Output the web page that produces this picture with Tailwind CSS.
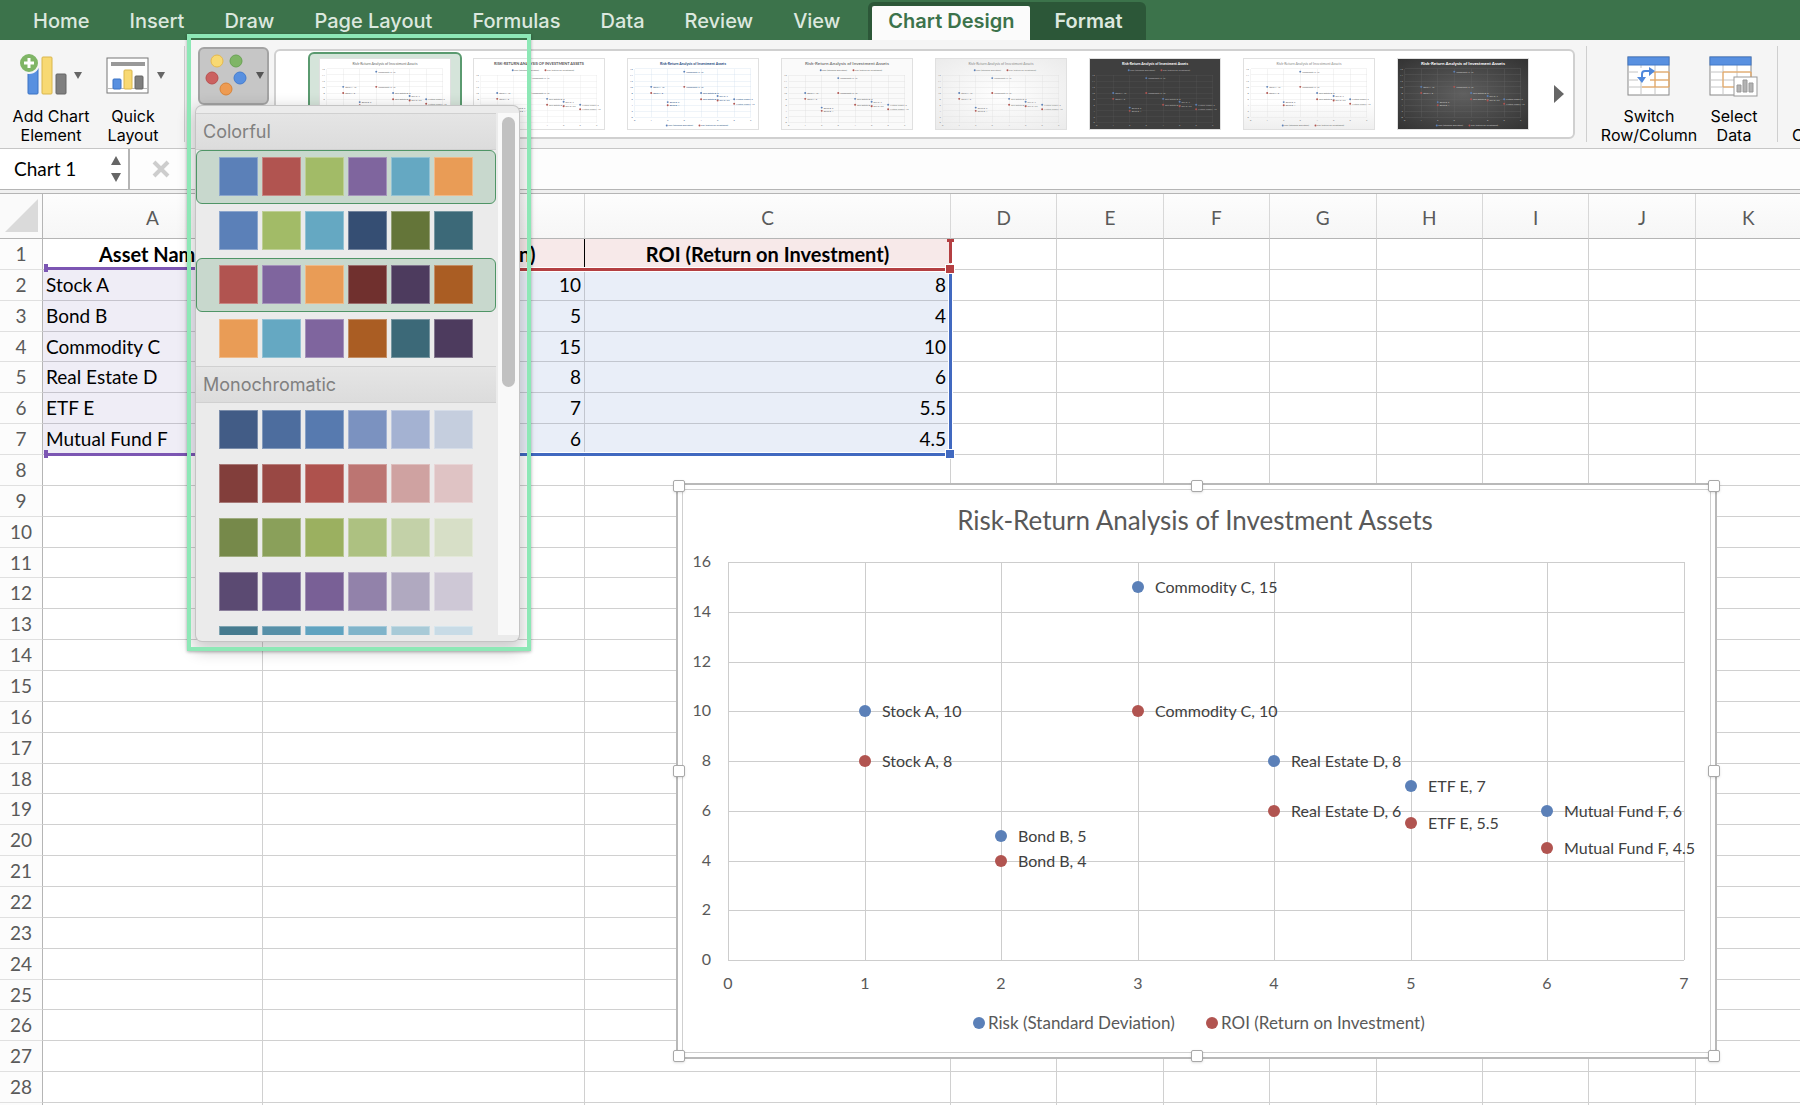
<!DOCTYPE html>
<html lang="en">
  <head>
    <meta charset="utf-8">
    <title>Chart 1</title>
    <script src="https://cdn.jsdelivr.net/npm/@tailwindcss/browser@4"></script>
  </head>

  <body class="relative flex h-screen flex-col overflow-hidden bg-white font-[Inter,sans-serif] text-black">
    <!-- Ribbon tabs -->
    <nav class="flex h-10 shrink-0 items-end bg-[#3c734b] pl-[13px] text-xl font-medium text-[#dce8df]">
      <a href="#" class="px-5 pb-[5px]">Home</a>
      <a href="#" class="px-5 pb-[5px]">Insert</a>
      <a href="#" class="px-5 pb-[5px]">Draw</a>
      <a href="#" class="px-5 pb-[5px]">Page Layout</a>
      <a href="#" class="px-5 pb-[5px]">Formulas</a>
      <a href="#" class="px-5 pb-[5px]">Data</a>
      <a href="#" class="px-5 pb-[5px]">Review</a>
      <a href="#" class="px-5 pb-[5px]">View</a>
      <div class="ml-2 flex h-[38px] items-end rounded-t-md bg-[#2c5738] pl-1 font-semibold">
        <a href="#" class="flex h-[34px] items-end rounded-t-xs bg-[#fbfbfb] px-4 pb-[5px] text-[#3c734b]">Chart Design</a>
        <a href="#" class="px-6 pb-[5px]">Format</a>
      </div>
    </nav>

    <!-- Ribbon -->
    <div class="flex h-[109px] shrink-0 overflow-hidden border-b border-[#c6c6c6] bg-[#f5f5f5] text-base leading-[19px]">
      <button class="ml-2 flex w-[86px] flex-col items-center">
        <svg class="ml-0.5 h-[67px] w-[68px]" viewBox="18 40 68 67">
          <rect x="28" y="67" width="10" height="27" rx="1" fill="#5890e0" stroke="#3b73c4"/>
          <rect x="42" y="57" width="10" height="37" rx="1" fill="#f8d973" stroke="#d9b64d"/>
          <rect x="56" y="74" width="10" height="20" rx="1" fill="#7f7f7f" stroke="#666"/>
          <circle cx="29" cy="63" r="10" fill="#7fb566" stroke="#f5f5f5" stroke-width="2"/>
          <path d="M29 58v10M24 63h10" stroke="#fff" stroke-width="3"/>
          <path d="M74 72h8l-4 7z" fill="#666"/>
        </svg>
        <span>Add Chart<br>Element</span>
      </button>
      <button class="ml-1 flex w-[70px] flex-col items-center">
        <svg class="ml-1 h-[67px] w-[64px]" viewBox="103 40 64 67">
          <rect x="107" y="58" width="41" height="35" fill="#fff" stroke="#777"/>
          <rect x="111" y="62" width="34" height="4" fill="#999"/>
          <path d="M108 88.500h39" stroke="#bbb"/>
          <rect x="113" y="79" width="8" height="10" rx="1" fill="#5890e0" stroke="#3b73c4"/>
          <rect x="124" y="70" width="8" height="19" rx="1" fill="#f8d973" stroke="#d9b64d"/>
          <rect x="135" y="76" width="8" height="13" rx="1" fill="#7f7f7f" stroke="#666"/>
          <path d="M157 72h8l-4 7z" fill="#666"/>
        </svg>
        <span>Quick<br>Layout</span>
      </button>
      <div class="mt-1.5 ml-4 h-24 w-px bg-[#cfcfcf]"></div>
      <button aria-label="Change Colors" class="mt-[7px] ml-[13px] h-[58px] w-[71px] rounded-md border-2 border-[#a3a3a3] bg-[#c6c6c6]">
        <svg class="h-[54px] w-[67px]" viewBox="200 49 67 54">
          <circle cx="217" cy="61" r="6" fill="#f8d973" stroke="#e6b94c"/>
          <circle cx="236" cy="61" r="6" fill="#7fb566" stroke="#6aa354"/>
          <circle cx="212" cy="78" r="6" fill="#cb6160" stroke="#b94f4e"/>
          <circle cx="240" cy="78" r="6" fill="#5890e0" stroke="#447cce"/>
          <circle cx="226" cy="89" r="6" fill="#ee9b52" stroke="#d98439"/>
          <path d="M256 72h8l-4 7z" fill="#555"/>
        </svg>
      </button>
      <div class="mt-[9px] ml-[5px] flex h-[90px] min-w-0 flex-1 items-start rounded-md border-2 border-[#d0d0d0] bg-white pl-8">
        <div id="gallery" class="flex min-w-0 flex-1 overflow-hidden"></div>
        <button aria-label="More styles" class="flex h-[86px] w-7 items-center justify-center">
          <svg class="h-5 w-3" viewBox="0 0 12 20"><path d="M1 1l10 9L1 19z" fill="#666"/></svg>
        </button>
      </div>
      <div class="mt-1.5 ml-[11px] h-24 w-px bg-[#cfcfcf]"></div>
      <button class="ml-3 flex w-[100px] flex-col items-center">
        <svg class="h-[67px] w-[44px]" viewBox="1627 40 44 67">
          <rect x="1628" y="57" width="41" height="38" fill="#fff" stroke="#888"/>
          <path d="M1641 65v30M1655 65v30M1628 72h41M1628 80h41M1628 87h41" stroke="#c4c4c4"/>
          <path d="M1642 72h27v15h-27M1655 72v15M1648 80h21" fill="none" stroke="#f0a450"/>
          <rect x="1628" y="57" width="41" height="8" fill="#5890e0" stroke="#4178c8"/>
          <path d="M1638 68h12v13h-12z" fill="#fff"/>
          <path d="M1642 78v-4q0-3 3-3h5" fill="none" stroke="#4f88dc" stroke-width="2"/>
          <path d="M1649 67l6 4-6 5zM1637 77h9l-4 6z" fill="#4f88dc"/>
        </svg>
        <span>Switch<br>Row/Column</span>
      </button>
      <button class="ml-2 flex w-[54px] flex-col items-center">
        <svg class="h-[67px] w-[52px]" viewBox="1709 40 52 67">
          <rect x="1711" y="57" width="41" height="38" fill="#fff" stroke="#888"/>
          <path d="M1724 65v30M1738 65v30M1711 72h41M1711 80h41M1711 87h41" stroke="#c4c4c4"/>
          <path d="M1752 72h-28v15h12" fill="none" stroke="#f0a450"/>
          <path d="M1752 72v6" stroke="#f0a450"/>
          <rect x="1711" y="57" width="41" height="8" fill="#5890e0" stroke="#4178c8"/>
          <rect x="1735" y="77" width="23" height="19" fill="#fff" stroke="#999"/>
          <path d="M1738 85h4v7h-4zM1744 80h4v12h-4zM1750 83h4v9h-4z" fill="#b3b3b3" stroke="#999"/>
        </svg>
        <span>Select<br>Data</span>
      </button>
      <div class="mt-1.5 ml-4 h-24 w-px bg-[#cfcfcf]"></div>
      <button class="ml-3.5 flex w-2 flex-col overflow-hidden pt-[86px] text-left">C</button>
    </div>

    <!-- Formula bar -->
    <div class="flex h-[41px] shrink-0 border-b border-[#b5b5b5] bg-[#fdfdfd] font-[Lato,sans-serif]">
      <div class="flex w-[130px] items-center border-r-2 border-[#b5b5b5] bg-white">
        <input aria-label="Name box" value="Chart 1" class="ml-3.5 w-24 text-[19px]">
        <button aria-label="Next name">
          <svg class="h-8 w-3" viewBox="0 0 12 32"><path d="M1 12l5-9 5 9zM1 20l5 9 5-9z" fill="#666"/></svg>
        </button>
      </div>
      <button aria-label="Cancel" class="ml-[22px]">
        <svg class="h-[18px] w-[18px]" viewBox="0 0 18 18"><path d="M2 2l14 14M16 2L2 16" stroke="#cdcdcd" stroke-width="4"/></svg>
      </button>
      <input aria-label="Formula" class="ml-4 flex-1">
    </div>
    <div class="h-1 shrink-0 border-b border-[#b5b5b5] bg-[#f0f0f0]"></div>

    <!-- Sheet -->
    <main class="relative min-h-0 flex-1 overflow-hidden font-[Lato,sans-serif]">
      <table class="h-[940px] w-[calc(100%+2px)] table-fixed border-separate border-spacing-0 text-[19px] leading-6">
        <colgroup>
          <col class="w-[43px]"><col class="w-[220px]"><col class="w-[322px]"><col class="w-[366px]">
          <col><col><col><col><col><col><col><col>
        </colgroup>
        <thead>
          <tr id="columns" class="h-[45px]"></tr>
        </thead>
        <tbody id="rows"></tbody>
      </table>

      <!-- Outlines of the ranges that feed the chart -->
      <div class="absolute top-[73px] left-12 h-[3px] w-[215px] bg-[#7c56b3]"></div>
      <div class="absolute top-[70px] left-11 h-2 w-1 bg-[#7c56b3]"></div>
      <div class="absolute top-[259px] left-12 h-[3px] w-[215px] bg-[#7c56b3]"></div>
      <div class="absolute top-[256px] left-11 h-2 w-1 bg-[#7c56b3]"></div>
      <div class="absolute top-[73px] left-[263px] h-[5px] w-[683px] border-y border-white bg-[#b43f42]"></div>
      <div class="absolute top-[45px] left-[949px] h-6 w-[3px] bg-[#b43f42]"></div>
      <div class="absolute top-[45px] left-[947px] h-[3px] w-[7px] bg-[#b43f42]"></div>
      <div class="absolute top-[258px] left-[263px] h-[5px] w-[683px] border-y border-white bg-[#4169c0]"></div>
      <div class="absolute top-[79px] left-[948px] h-[176px] w-[5px] border-x border-white bg-[#4169c0]"></div>
      <div class="absolute top-[70px] left-[945px] size-2.5 border border-white bg-[#b43f42]"></div>
      <div class="absolute top-[255px] left-[945px] size-2.5 border border-white bg-[#4169c0]"></div>

      <!-- Chart object -->
      <section class="absolute top-[289px] left-[676px] h-[576px] w-[1041px] border-2 border-[#b9b9b9] bg-white p-1">
        <div class="h-full border border-[#cfcfcf]">
          <svg id="chart" class="h-[562px] w-[1027px]" viewBox="683 490 1027 562"></svg>
        </div>
        <div id="handles"></div>
      </section>
    </main>

    <!-- Colour menu -->
    <div class="absolute top-[106px] left-[196px] flex h-[535px] w-[323px] flex-col overflow-hidden rounded-md bg-[#ebebeb] pt-[7px] pb-1.5 shadow-[0_0_0_1px_#c4c4c4,0_6px_16px_4px_rgba(0,0,0,0.2)]">
      <div class="flex min-h-0 flex-1">
        <div id="palettes" class="w-[300px] overflow-hidden"></div>
        <div class="ml-0.5 flex-1 bg-[#f9f9f9] pt-1 pl-1">
          <div class="h-[270px] w-[13px] rounded-full bg-[#c1c1c1]"></div>
        </div>
      </div>
    </div>
    <!-- Highlight frame -->
    <div class="pointer-events-none absolute top-[34px] left-[187px] h-[617px] w-[344px] border-4 border-[#8de8b6] shadow-[0_1px_3px_rgba(0,0,0,0.3)]"></div>

    <script>
      const assets = [
        { name: 'Stock A', risk: 10, roi: 8 },
        { name: 'Bond B', risk: 5, roi: 4 },
        { name: 'Commodity C', risk: 15, roi: 10 },
        { name: 'Real Estate D', risk: 8, roi: 6 },
        { name: 'ETF E', risk: 7, roi: 5.5 },
        { name: 'Mutual Fund F', risk: 6, roi: 4.5 },
      ]
      const title = 'Risk-Return Analysis of Investment Assets'
      const get = (id) => document.getElementById(id)
      const range = (n) => [...Array(n).keys()]

      // Sheet
      get('columns').innerHTML = `
        <th class="border-r border-b border-[#b5b5b5] bg-[#fafafa]"><svg class="ml-1 size-9" viewBox="0 0 36 36"><path d="M34 1v33H1z" fill="#dadada"/></svg></th>
        ${[...'ABCDEFGHIJK'].map((letter) => `
          <th scope="col" class="border-r border-b border-r-[#d8d8d8] border-b-[#b5b5b5] bg-linear-to-b from-[#fdfdfd] to-[#f6f6f6] pt-1 font-normal text-[#5a5a5a]">${letter}</th>
        `).join('')}`

      const cell = 'border-r border-b border-[#d0d0d0]'

      function cells(row) {
        if (row === 0) {
          return `
            <td class="border-r border-b border-[#d0d0d0] text-center text-[20px] font-bold">Asset Name</td>
            <td class="border-r border-b border-r-black border-b-[#d0d0d0] bg-[#f7e9e9] text-center text-[20px] font-bold">Risk (Standard Deviation)</td>
            <td class="border-r border-b border-[#d0d0d0] bg-[#f7e9e9] text-center text-[20px] font-bold">ROI (Return on Investment)</td>`
        }
        const asset = assets[row - 1]
        if (!asset) return `<td class="${cell}"></td>`.repeat(3)
        return `
          <td class="border-r border-b border-[#c6c4cd] bg-[#efedf6] pl-[3px]">${asset.name}</td>
          <td class="border-r border-b border-[#c2c6cf] bg-[#e9eef8] pr-[3px] text-right">${asset.risk}</td>
          <td class="border-r border-b border-[#c2c6cf] bg-[#e9eef8] pr-1 text-right">${asset.roi}</td>`
      }

      get('rows').innerHTML = range(29).map((row) => `
        <tr>
          <th scope="row" class="border-r border-b border-r-[#b5b5b5] border-b-[#e0e0e0] bg-[#fcfcfc] font-normal text-[#5a5a5a]">${row + 1}</th>
          ${cells(row)}
          ${`<td class="${cell}"></td>`.repeat(8)}
        </tr>
      `).join('')

      // Scatter plot, x0..x1 by y0..y1 (y1 is the baseline)
      function plot({ x0, x1, y0, y1, grid, text, size, radius, gap, label, axis, blue = '#5b80b8', red = '#b15450' }) {
        const px = (v) => Math.round(x0 + (x1 - x0) * v / 7)
        const py = (v) => Math.round(y1 - (y1 - y0) * v / 16)
        const point = (x, v, name, fill) => `
          <circle cx="${px(x)}" cy="${py(v)}" r="${radius}" fill="${fill}"/>
          <text x="${px(x) + gap}" y="${py(v) + Math.round(size * 0.36)}" fill="${label}">${name}, ${v}</text>`
        return `
          <g stroke="${grid}" shape-rendering="crispEdges">
            ${range(8).map((v) => `<path d="M${px(v)} ${y0}V${y1}"/>`).join('')}
            ${range(9).map((v) => `<path d="M${x0} ${py(v * 2)}H${x1}"/>`).join('')}
          </g>
          <g font-size="${size}" fill="${text}">
            <g text-anchor="end">${range(9).map((v) => `<text x="${x0 - gap}" y="${py(v * 2) + (size > 10 ? 5 : 3)}">${v * 2}</text>`).join('')}</g>
            <g text-anchor="middle">${range(8).map((v) => `<text x="${px(v)}" y="${y1 + axis}">${v}</text>`).join('')}</g>
            ${assets.map((a, i) => point(i + 1, a.risk, a.name, blue) + point(i + 1, a.roi, a.name, red)).join('')}
          </g>`
      }

      get('chart').innerHTML = `
        <text x="1195" y="530" text-anchor="middle" font-size="26" fill="#595959">${title}</text>
        ${plot({ x0: 728, x1: 1684, y0: 562, y1: 960, grid: '#cdcdcd', text: '#595959', size: 16, radius: 6, gap: 17, label: '#404040', axis: 29 })}
        <g font-size="17" fill="#595959">
          <circle cx="979" cy="1023" r="6" fill="#5b80b8"/><text x="988" y="1029">Risk (Standard Deviation)</text>
          <circle cx="1212" cy="1023" r="6" fill="#b15450"/><text x="1221" y="1029">ROI (Return on Investment)</text>
        </g>`

      get('handles').innerHTML = [
        '-top-[5px] -left-[5px]', '-top-[5px] inset-x-0 mx-auto', '-top-[5px] -right-[5px]',
        'inset-y-0 my-auto -left-[5px]', 'inset-y-0 my-auto -right-[5px]',
        '-bottom-[5px] -left-[5px]', '-bottom-[5px] inset-x-0 mx-auto', '-bottom-[5px] -right-[5px]',
      ].map((place) => `<i class="absolute size-3 rounded-xs border border-[#a8a8a8] bg-white shadow ${place}"></i>`).join('')

      // Style gallery
      const styles = [
        { bg: 'bg-white', grid: '#ddd', text: '#666', title: '#666' },
        { bg: 'bg-white', grid: '#e2e2e2', text: '#666', title: '#555', bold: true, top: true, caps: true },
        { bg: 'bg-white', grid: '#cfdcee', text: '#2c4f80', title: '#1f497d', bold: true },
        { bg: 'bg-[#fafafa]', grid: '#d9d9d9', text: '#666', title: '#7a7a7a', bold: true, top: true, big: true },
        { bg: 'bg-radial from-white to-[#ebebeb]', grid: '#dcdcdc', text: '#777', title: '#8a8a8a', top: true },
        { bg: 'bg-[#3f3f3f]', grid: '#555', text: '#bbb', title: '#fff', bold: true, top: true },
        { bg: 'bg-linear-to-b from-white from-60% to-[#efefef]', grid: '#ddd', text: '#666', title: '#888' },
        { bg: 'bg-radial from-[#606060] to-[#333]', grid: '#666', text: '#ccc', title: '#fff', bold: true, big: true },
      ]

      function thumbnail(s) {
        const ly = s.top ? 38 : 208
        return `
          <svg class="h-[72px] w-[132px] border border-[#e0e0e0] font-[Lato,sans-serif] ${s.bg}" viewBox="0 0 396 216">
            <text x="198" y="19" text-anchor="middle" font-size="${s.big ? 14 : s.caps ? 12 : 11}" font-weight="${s.bold ? 700 : 400}" fill="${s.title}">${s.caps ? title.toUpperCase() : title}</text>
            ${plot({ x0: 18, x1: 376, y0: s.top ? 50 : 30, y1: s.top ? 196 : 180, grid: s.grid, text: s.text, size: 7, radius: 3, gap: 6, label: s.text, axis: 12 })}
            <g font-size="7" fill="${s.text}">
              <circle cx="117" cy="${ly - 3}" r="3" fill="#5b80b8"/><text x="122" y="${ly}">Risk (Standard Deviation)</text>
              <circle cx="218" cy="${ly - 3}" r="3" fill="#b15450"/><text x="223" y="${ly}">ROI (Return on Investment)</text>
            </g>
          </svg>`
      }

      get('gallery').innerHTML = styles.map((s, i) => `
        <button aria-label="Style ${i + 1}" class="mt-px flex h-[84px] w-[154px] shrink-0 items-center justify-center ${i === 0 ? 'rounded-md border-2 border-[#5a9a6f] bg-[#d5e4da]' : ''}">${thumbnail(s)}</button>
      `).join('')

      // Colour menu
      const groups = {
        Colorful: [
          ['#5b80b8', '#b15450', '#a2bb67', '#7f659e', '#65a8c2', '#e99c56'],
          ['#5b80b8', '#a2bb67', '#65a8c2', '#354e73', '#647539', '#3c6978'],
          ['#b15450', '#7f659e', '#e99c56', '#70302e', '#4d3b5e', '#aa5d23'],
          ['#e99c56', '#65a8c2', '#7f659e', '#aa5d23', '#3c6978', '#4d3b5e'],
        ],
        Monochromatic: [
          ['#425c86', '#4d6d9e', '#577aaf', '#7b92c0', '#a4b2d2', '#c5cede'],
          ['#823e3b', '#994844', '#ae524d', '#bc7572', '#cfa2a1', '#dfc3c4'],
          ['#76894a', '#8aa05a', '#9bb060', '#adc181', '#c3d1a8', '#d7dfc7'],
          ['#5b4a72', '#695588', '#796096', '#9282aa', '#b0a9c0', '#cec8d6'],
          ['#467b8f', '#5790a8', '#60a3c0', '#80b4ca', '#a8cad7', '#c8dbe6'],
        ],
      }
      const selected = ['Colorful0', 'Colorful2']

      get('palettes').innerHTML = Object.entries(groups).map(([name, palettes]) => `
        <h2 class="h-[37px] border-y border-[#d0d0d0] bg-linear-to-b from-[#e5e5e5] to-[#dcdcdc] pl-[7px] text-lg leading-9 text-[#808080]">${name}</h2>
        ${palettes.map((colors, i) => `
          <button aria-label="${name} ${i + 1}" class="flex h-[54px] w-full gap-1 rounded-md border pt-1.5 pl-[22px] ${selected.includes(name + i) ? 'border-[#4f9566] bg-[#c8d8cd]' : 'border-transparent'}">
            ${colors.map((c) => `<span class="size-[39px] shrink-0 border border-white/30" style="background-color: ${c}"></span>`).join('')}
          </button>
        `).join('')}
      `).join('')
    </script>
  </body>
</html>
